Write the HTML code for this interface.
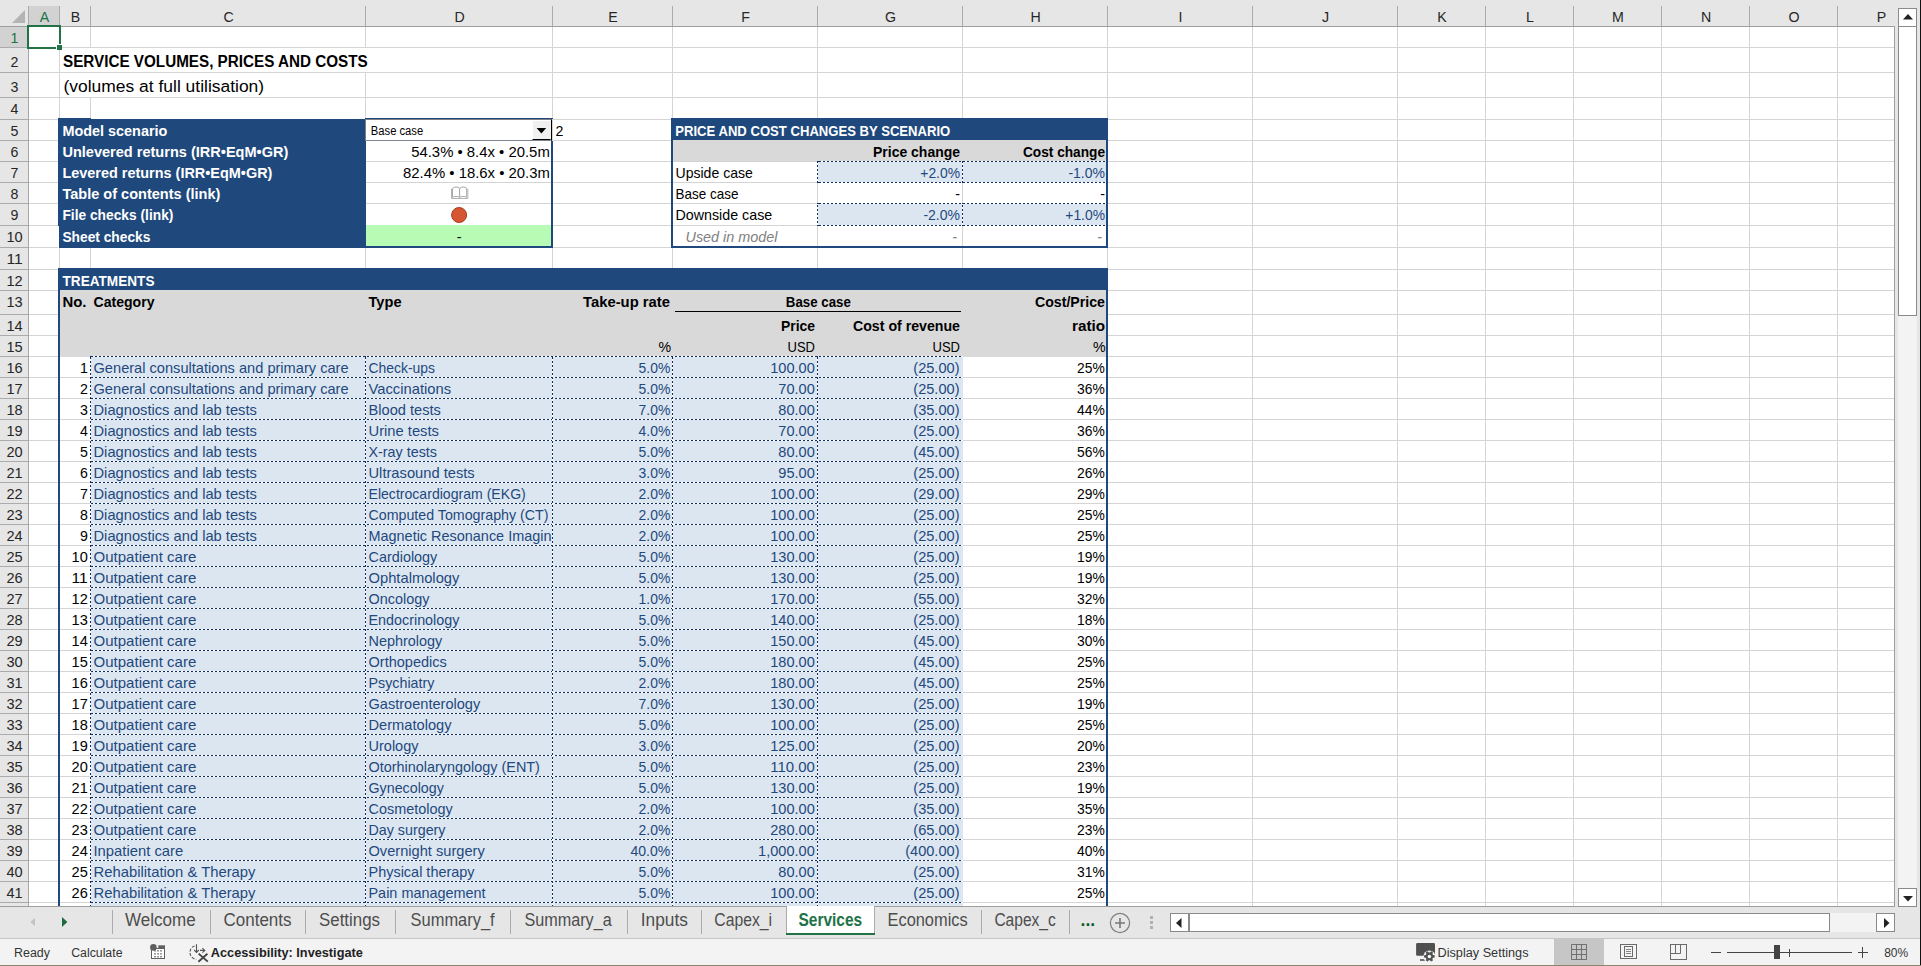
<!DOCTYPE html>
<html lang="en"><head><meta charset="utf-8"><title>Services</title>
<style>
html,body{margin:0;padding:0}
body{width:1921px;height:966px;overflow:hidden;background:#fff;position:relative;font-family:"Liberation Sans",sans-serif}
#x div{position:absolute}
.hd{height:1px;background-image:repeating-linear-gradient(90deg,#0f2f63 0 2px,#fff 2px 4px)}
.vd{width:1px;background-image:repeating-linear-gradient(180deg,#0f2f63 0 2px,#fff 2px 4px)}
#t{position:absolute;left:0;top:0}
#t text{font-family:"Liberation Sans",sans-serif;white-space:pre}
</style></head>
<body>
<div id="x">
<div style="left:29px;top:47px;width:1865px;height:1px;background:#d4d4d4;"></div>
<div style="left:29px;top:72px;width:1865px;height:1px;background:#d4d4d4;"></div>
<div style="left:29px;top:97px;width:1865px;height:1px;background:#d4d4d4;"></div>
<div style="left:29px;top:119px;width:1865px;height:1px;background:#d4d4d4;"></div>
<div style="left:29px;top:140px;width:1865px;height:1px;background:#d4d4d4;"></div>
<div style="left:29px;top:161px;width:1865px;height:1px;background:#d4d4d4;"></div>
<div style="left:29px;top:182px;width:1865px;height:1px;background:#d4d4d4;"></div>
<div style="left:29px;top:203px;width:1865px;height:1px;background:#d4d4d4;"></div>
<div style="left:29px;top:225px;width:1865px;height:1px;background:#d4d4d4;"></div>
<div style="left:29px;top:247px;width:1865px;height:1px;background:#d4d4d4;"></div>
<div style="left:29px;top:269px;width:1865px;height:1px;background:#d4d4d4;"></div>
<div style="left:29px;top:290px;width:1865px;height:1px;background:#d4d4d4;"></div>
<div style="left:29px;top:314px;width:1865px;height:1px;background:#d4d4d4;"></div>
<div style="left:29px;top:335px;width:1865px;height:1px;background:#d4d4d4;"></div>
<div style="left:29px;top:356px;width:1865px;height:1px;background:#d4d4d4;"></div>
<div style="left:29px;top:377px;width:1865px;height:1px;background:#d4d4d4;"></div>
<div style="left:29px;top:398px;width:1865px;height:1px;background:#d4d4d4;"></div>
<div style="left:29px;top:419px;width:1865px;height:1px;background:#d4d4d4;"></div>
<div style="left:29px;top:440px;width:1865px;height:1px;background:#d4d4d4;"></div>
<div style="left:29px;top:461px;width:1865px;height:1px;background:#d4d4d4;"></div>
<div style="left:29px;top:482px;width:1865px;height:1px;background:#d4d4d4;"></div>
<div style="left:29px;top:503px;width:1865px;height:1px;background:#d4d4d4;"></div>
<div style="left:29px;top:524px;width:1865px;height:1px;background:#d4d4d4;"></div>
<div style="left:29px;top:545px;width:1865px;height:1px;background:#d4d4d4;"></div>
<div style="left:29px;top:566px;width:1865px;height:1px;background:#d4d4d4;"></div>
<div style="left:29px;top:587px;width:1865px;height:1px;background:#d4d4d4;"></div>
<div style="left:29px;top:608px;width:1865px;height:1px;background:#d4d4d4;"></div>
<div style="left:29px;top:629px;width:1865px;height:1px;background:#d4d4d4;"></div>
<div style="left:29px;top:650px;width:1865px;height:1px;background:#d4d4d4;"></div>
<div style="left:29px;top:671px;width:1865px;height:1px;background:#d4d4d4;"></div>
<div style="left:29px;top:692px;width:1865px;height:1px;background:#d4d4d4;"></div>
<div style="left:29px;top:713px;width:1865px;height:1px;background:#d4d4d4;"></div>
<div style="left:29px;top:734px;width:1865px;height:1px;background:#d4d4d4;"></div>
<div style="left:29px;top:755px;width:1865px;height:1px;background:#d4d4d4;"></div>
<div style="left:29px;top:776px;width:1865px;height:1px;background:#d4d4d4;"></div>
<div style="left:29px;top:797px;width:1865px;height:1px;background:#d4d4d4;"></div>
<div style="left:29px;top:818px;width:1865px;height:1px;background:#d4d4d4;"></div>
<div style="left:29px;top:839px;width:1865px;height:1px;background:#d4d4d4;"></div>
<div style="left:29px;top:860px;width:1865px;height:1px;background:#d4d4d4;"></div>
<div style="left:29px;top:881px;width:1865px;height:1px;background:#d4d4d4;"></div>
<div style="left:29px;top:902px;width:1865px;height:1px;background:#d4d4d4;"></div>
<div style="left:59px;top:27px;width:1px;height:879px;background:#d4d4d4;"></div>
<div style="left:90px;top:27px;width:1px;height:879px;background:#d4d4d4;"></div>
<div style="left:365px;top:27px;width:1px;height:879px;background:#d4d4d4;"></div>
<div style="left:552px;top:27px;width:1px;height:879px;background:#d4d4d4;"></div>
<div style="left:672px;top:27px;width:1px;height:879px;background:#d4d4d4;"></div>
<div style="left:817px;top:27px;width:1px;height:879px;background:#d4d4d4;"></div>
<div style="left:962px;top:27px;width:1px;height:879px;background:#d4d4d4;"></div>
<div style="left:1107px;top:27px;width:1px;height:879px;background:#d4d4d4;"></div>
<div style="left:1252px;top:27px;width:1px;height:879px;background:#d4d4d4;"></div>
<div style="left:1397px;top:27px;width:1px;height:879px;background:#d4d4d4;"></div>
<div style="left:1485px;top:27px;width:1px;height:879px;background:#d4d4d4;"></div>
<div style="left:1573px;top:27px;width:1px;height:879px;background:#d4d4d4;"></div>
<div style="left:1661px;top:27px;width:1px;height:879px;background:#d4d4d4;"></div>
<div style="left:1749px;top:27px;width:1px;height:879px;background:#d4d4d4;"></div>
<div style="left:1837px;top:27px;width:1px;height:879px;background:#d4d4d4;"></div>
<div style="left:90px;top:48px;width:1px;height:24px;background:#fff;"></div>
<div style="left:365px;top:48px;width:1px;height:24px;background:#fff;"></div>
<div style="left:90px;top:73px;width:1px;height:24px;background:#fff;"></div>
<div style="left:58px;top:118px;width:33px;height:130px;background:#1f497d;"></div>
<div style="left:91px;top:119px;width:275px;height:129px;background:#1f497d;"></div>
<div style="left:58px;top:226px;width:1px;height:22px;background:#fff;"></div>
<div style="left:365px;top:118px;width:188px;height:1px;background:#1f497d;"></div>
<div style="left:551px;top:141px;width:2px;height:107px;background:#1f497d;"></div>
<div style="left:365px;top:246px;width:188px;height:2px;background:#1f497d;"></div>
<div style="left:366px;top:225px;width:185px;height:21px;background:#b7fbb5;"></div>
<div style="left:365px;top:119px;width:187px;height:22px;background:#fff;box-sizing:border-box;border:1px solid #808080;border-right-color:#000;border-bottom-color:#7f8590"></div>
<div style="left:532px;top:120px;width:19px;height:20px;background:#f0f0f0;box-sizing:border-box;border:1px solid;border-color:#fff #f0f0f0 #000 #fff"></div>
<div style="left:552px;top:119px;width:1px;height:22px;background:#d4d4d4;"></div>
<svg style="position:absolute;left:536px;top:128px" width="11" height="6"><path d="M0.6 0H10.2L5.4 5.4Z" fill="#000"/></svg>
<div style="left:671px;top:118px;width:437px;height:22px;background:#1f497d;"></div>
<div style="left:671px;top:118px;width:2px;height:130px;background:#1f497d;"></div>
<div style="left:1106px;top:118px;width:2px;height:130px;background:#1f497d;"></div>
<div style="left:671px;top:246px;width:437px;height:2px;background:#1f497d;"></div>
<div style="left:673px;top:140px;width:433px;height:21px;background:#d9d9d9;"></div>
<div style="left:818px;top:162px;width:288px;height:20px;background:#dce6f1;"></div>
<div class="hd" style="left:817px;top:161px;width:289px;background-position:2px 0"></div>
<div class="hd" style="left:817px;top:182px;width:289px;background-position:2px 0"></div>
<div class="vd" style="left:817px;top:161px;height:22px;background-position:0 0px"></div>
<div class="vd" style="left:962px;top:161px;height:22px;background-position:0 0px"></div>
<div style="left:818px;top:204px;width:288px;height:21px;background:#dce6f1;"></div>
<div class="hd" style="left:817px;top:203px;width:289px;background-position:2px 0"></div>
<div class="hd" style="left:817px;top:225px;width:289px;background-position:2px 0"></div>
<div class="vd" style="left:817px;top:203px;height:23px;background-position:0 2px"></div>
<div class="vd" style="left:962px;top:203px;height:23px;background-position:0 2px"></div>
<div style="left:58px;top:268px;width:1050px;height:22px;background:#1f497d;"></div>
<div style="left:58px;top:268px;width:2px;height:638px;background:#1f497d;"></div>
<div style="left:1106px;top:268px;width:2px;height:638px;background:#1f497d;"></div>
<div style="left:60px;top:290px;width:1046px;height:67px;background:#d9d9d9;"></div>
<div style="left:675px;top:311px;width:286px;height:1px;background:#000;"></div>
<div style="left:91px;top:357px;width:872px;height:549px;background:#dce6f1;"></div>
<div class="hd" style="left:90px;top:356px;width:873px;background-position:1px 0"></div>
<div class="hd" style="left:90px;top:377px;width:873px;background-position:1px 0"></div>
<div class="hd" style="left:90px;top:398px;width:873px;background-position:1px 0"></div>
<div class="hd" style="left:90px;top:419px;width:873px;background-position:1px 0"></div>
<div class="hd" style="left:90px;top:440px;width:873px;background-position:1px 0"></div>
<div class="hd" style="left:90px;top:461px;width:873px;background-position:1px 0"></div>
<div class="hd" style="left:90px;top:482px;width:873px;background-position:1px 0"></div>
<div class="hd" style="left:90px;top:503px;width:873px;background-position:1px 0"></div>
<div class="hd" style="left:90px;top:524px;width:873px;background-position:1px 0"></div>
<div class="hd" style="left:90px;top:545px;width:873px;background-position:1px 0"></div>
<div class="hd" style="left:90px;top:566px;width:873px;background-position:1px 0"></div>
<div class="hd" style="left:90px;top:587px;width:873px;background-position:1px 0"></div>
<div class="hd" style="left:90px;top:608px;width:873px;background-position:1px 0"></div>
<div class="hd" style="left:90px;top:629px;width:873px;background-position:1px 0"></div>
<div class="hd" style="left:90px;top:650px;width:873px;background-position:1px 0"></div>
<div class="hd" style="left:90px;top:671px;width:873px;background-position:1px 0"></div>
<div class="hd" style="left:90px;top:692px;width:873px;background-position:1px 0"></div>
<div class="hd" style="left:90px;top:713px;width:873px;background-position:1px 0"></div>
<div class="hd" style="left:90px;top:734px;width:873px;background-position:1px 0"></div>
<div class="hd" style="left:90px;top:755px;width:873px;background-position:1px 0"></div>
<div class="hd" style="left:90px;top:776px;width:873px;background-position:1px 0"></div>
<div class="hd" style="left:90px;top:797px;width:873px;background-position:1px 0"></div>
<div class="hd" style="left:90px;top:818px;width:873px;background-position:1px 0"></div>
<div class="hd" style="left:90px;top:839px;width:873px;background-position:1px 0"></div>
<div class="hd" style="left:90px;top:860px;width:873px;background-position:1px 0"></div>
<div class="hd" style="left:90px;top:881px;width:873px;background-position:1px 0"></div>
<div class="hd" style="left:90px;top:902px;width:873px;background-position:1px 0"></div>
<div class="vd" style="left:90px;top:356px;height:550px;background-position:0 1px"></div>
<div class="vd" style="left:365px;top:356px;height:550px;background-position:0 1px"></div>
<div class="vd" style="left:552px;top:356px;height:550px;background-position:0 1px"></div>
<div class="vd" style="left:672px;top:356px;height:550px;background-position:0 1px"></div>
<div class="vd" style="left:817px;top:356px;height:550px;background-position:0 1px"></div>
<div style="left:0px;top:0px;width:1921px;height:26px;background:#e6e6e6;"></div>
<div style="left:0px;top:26px;width:1895px;height:1px;background:#9e9e9e;"></div>
<div style="left:0px;top:27px;width:28px;height:879px;background:#e6e6e6;"></div>
<div style="left:28px;top:27px;width:1px;height:879px;background:#a6a6a6;"></div>
<div style="left:29px;top:6px;width:30px;height:20px;background:#d2d2d2;"></div>
<div style="left:0px;top:27px;width:28px;height:20px;background:#d2d2d2;"></div>
<div style="left:28px;top:6px;width:1px;height:20px;background:#ababab;"></div>
<div style="left:59px;top:6px;width:1px;height:20px;background:#ababab;"></div>
<div style="left:90px;top:6px;width:1px;height:20px;background:#ababab;"></div>
<div style="left:365px;top:6px;width:1px;height:20px;background:#ababab;"></div>
<div style="left:552px;top:6px;width:1px;height:20px;background:#ababab;"></div>
<div style="left:672px;top:6px;width:1px;height:20px;background:#ababab;"></div>
<div style="left:817px;top:6px;width:1px;height:20px;background:#ababab;"></div>
<div style="left:962px;top:6px;width:1px;height:20px;background:#ababab;"></div>
<div style="left:1107px;top:6px;width:1px;height:20px;background:#ababab;"></div>
<div style="left:1252px;top:6px;width:1px;height:20px;background:#ababab;"></div>
<div style="left:1397px;top:6px;width:1px;height:20px;background:#ababab;"></div>
<div style="left:1485px;top:6px;width:1px;height:20px;background:#ababab;"></div>
<div style="left:1573px;top:6px;width:1px;height:20px;background:#ababab;"></div>
<div style="left:1661px;top:6px;width:1px;height:20px;background:#ababab;"></div>
<div style="left:1749px;top:6px;width:1px;height:20px;background:#ababab;"></div>
<div style="left:1837px;top:6px;width:1px;height:20px;background:#ababab;"></div>
<div style="left:0px;top:47px;width:28px;height:1px;background:#ababab;"></div>
<div style="left:0px;top:72px;width:28px;height:1px;background:#ababab;"></div>
<div style="left:0px;top:97px;width:28px;height:1px;background:#ababab;"></div>
<div style="left:0px;top:119px;width:28px;height:1px;background:#ababab;"></div>
<div style="left:0px;top:140px;width:28px;height:1px;background:#ababab;"></div>
<div style="left:0px;top:161px;width:28px;height:1px;background:#ababab;"></div>
<div style="left:0px;top:182px;width:28px;height:1px;background:#ababab;"></div>
<div style="left:0px;top:203px;width:28px;height:1px;background:#ababab;"></div>
<div style="left:0px;top:225px;width:28px;height:1px;background:#ababab;"></div>
<div style="left:0px;top:247px;width:28px;height:1px;background:#ababab;"></div>
<div style="left:0px;top:269px;width:28px;height:1px;background:#ababab;"></div>
<div style="left:0px;top:290px;width:28px;height:1px;background:#ababab;"></div>
<div style="left:0px;top:314px;width:28px;height:1px;background:#ababab;"></div>
<div style="left:0px;top:335px;width:28px;height:1px;background:#ababab;"></div>
<div style="left:0px;top:356px;width:28px;height:1px;background:#ababab;"></div>
<div style="left:0px;top:377px;width:28px;height:1px;background:#ababab;"></div>
<div style="left:0px;top:398px;width:28px;height:1px;background:#ababab;"></div>
<div style="left:0px;top:419px;width:28px;height:1px;background:#ababab;"></div>
<div style="left:0px;top:440px;width:28px;height:1px;background:#ababab;"></div>
<div style="left:0px;top:461px;width:28px;height:1px;background:#ababab;"></div>
<div style="left:0px;top:482px;width:28px;height:1px;background:#ababab;"></div>
<div style="left:0px;top:503px;width:28px;height:1px;background:#ababab;"></div>
<div style="left:0px;top:524px;width:28px;height:1px;background:#ababab;"></div>
<div style="left:0px;top:545px;width:28px;height:1px;background:#ababab;"></div>
<div style="left:0px;top:566px;width:28px;height:1px;background:#ababab;"></div>
<div style="left:0px;top:587px;width:28px;height:1px;background:#ababab;"></div>
<div style="left:0px;top:608px;width:28px;height:1px;background:#ababab;"></div>
<div style="left:0px;top:629px;width:28px;height:1px;background:#ababab;"></div>
<div style="left:0px;top:650px;width:28px;height:1px;background:#ababab;"></div>
<div style="left:0px;top:671px;width:28px;height:1px;background:#ababab;"></div>
<div style="left:0px;top:692px;width:28px;height:1px;background:#ababab;"></div>
<div style="left:0px;top:713px;width:28px;height:1px;background:#ababab;"></div>
<div style="left:0px;top:734px;width:28px;height:1px;background:#ababab;"></div>
<div style="left:0px;top:755px;width:28px;height:1px;background:#ababab;"></div>
<div style="left:0px;top:776px;width:28px;height:1px;background:#ababab;"></div>
<div style="left:0px;top:797px;width:28px;height:1px;background:#ababab;"></div>
<div style="left:0px;top:818px;width:28px;height:1px;background:#ababab;"></div>
<div style="left:0px;top:839px;width:28px;height:1px;background:#ababab;"></div>
<div style="left:0px;top:860px;width:28px;height:1px;background:#ababab;"></div>
<div style="left:0px;top:881px;width:28px;height:1px;background:#ababab;"></div>
<div style="left:0px;top:902px;width:28px;height:1px;background:#ababab;"></div>
<svg style="position:absolute;left:11px;top:9px" width="15" height="15"><path d="M14 1V14H1Z" fill="#b4b4b4"/></svg>
<div style="left:1894px;top:26px;width:1px;height:881px;background:#9e9e9e;"></div>
<div style="left:0px;top:906px;width:1895px;height:1px;background:#9e9e9e;"></div>
<div style="left:1895px;top:0px;width:26px;height:907px;background:#e6e6e6;"></div>
<div style="left:27px;top:25px;width:34px;height:2px;background:#217346;"></div>
<div style="left:27px;top:25px;width:2px;height:24px;background:#217346;"></div>
<div style="left:59px;top:25px;width:2px;height:21px;background:#217346;"></div>
<div style="left:27px;top:47px;width:30px;height:2px;background:#217346;"></div>
<div style="left:56px;top:44px;width:6px;height:6px;background:#fff;"></div>
<div style="left:57px;top:45px;width:5px;height:5px;background:#217346;"></div>
<div style="left:1898px;top:27px;width:19px;height:861px;background:#f3f3f3;"></div>
<div style="left:1898px;top:8px;width:19px;height:19px;background:#fff;box-sizing:border-box;border:1px solid #8a8a8a"></div>
<div style="left:1898px;top:27px;width:19px;height:289px;background:#fff;box-sizing:border-box;border:1px solid #8a8a8a;border-top:none"></div>
<div style="left:1898px;top:888px;width:19px;height:19px;background:#fff;box-sizing:border-box;border:1px solid #8a8a8a"></div>
<svg style="position:absolute;left:1903px;top:14px" width="10" height="6"><path d="M0 5.5H10L5 0Z" fill="#222"/></svg>
<svg style="position:absolute;left:1903px;top:896px" width="10" height="6"><path d="M0 0H10L5 5.5Z" fill="#222"/></svg>
<div style="left:1920px;top:0px;width:1px;height:966px;background:#111;"></div>
<div style="left:0px;top:907px;width:1920px;height:31px;background:#e6e6e6;"></div>
<div style="left:0px;top:938px;width:1920px;height:1px;background:#c6c6c6;"></div>
<div style="left:0px;top:939px;width:1920px;height:26px;background:#f3f3f3;"></div>
<div style="left:0px;top:965px;width:1921px;height:1px;background:#8a8672;"></div>
<svg style="position:absolute;left:29px;top:916px" width="8" height="12"><path d="M6 2V10L1.2 6Z" fill="#c3c3c3"/></svg>
<svg style="position:absolute;left:61px;top:916px" width="8" height="12"><path d="M1 1V11L6.4 6Z" fill="#1e6b3d"/></svg>
<div style="left:112px;top:910px;width:1px;height:24px;background:#ababab;"></div>
<div style="left:210px;top:910px;width:1px;height:24px;background:#ababab;"></div>
<div style="left:305px;top:910px;width:1px;height:24px;background:#ababab;"></div>
<div style="left:395px;top:910px;width:1px;height:24px;background:#ababab;"></div>
<div style="left:510px;top:910px;width:1px;height:24px;background:#ababab;"></div>
<div style="left:627px;top:910px;width:1px;height:24px;background:#ababab;"></div>
<div style="left:701px;top:910px;width:1px;height:24px;background:#ababab;"></div>
<div style="left:981px;top:910px;width:1px;height:24px;background:#ababab;"></div>
<div style="left:1069px;top:910px;width:1px;height:24px;background:#ababab;"></div>
<div style="left:786px;top:906px;width:89px;height:27px;background:#fff;box-sizing:border-box;border-left:1px solid #ababab;border-right:1px solid #ababab"></div>
<div style="left:786px;top:933px;width:89px;height:2px;background:#217346;"></div>
<svg style="position:absolute;left:1109px;top:912px" width="22" height="22"><circle cx="11" cy="11" r="9.6" fill="none" stroke="#808080" stroke-width="1.2"/><path d="M6 11H16M11 6V16" stroke="#777" stroke-width="1.6"/></svg>
<div style="left:1150px;top:916px;width:3px;height:3px;background:#b0b0b0;"></div>
<div style="left:1150px;top:921px;width:3px;height:3px;background:#b0b0b0;"></div>
<div style="left:1150px;top:926px;width:3px;height:3px;background:#b0b0b0;"></div>
<div style="left:1170px;top:913px;width:725px;height:19px;background:#f3f3f3;"></div>
<div style="left:1170px;top:913px;width:19px;height:19px;background:#fff;box-sizing:border-box;border:1px solid #8a8a8a"></div>
<div style="left:1189px;top:913px;width:641px;height:19px;background:#fff;box-sizing:border-box;border:1px solid #8a8a8a"></div>
<div style="left:1876px;top:913px;width:19px;height:19px;background:#fff;box-sizing:border-box;border:1px solid #8a8a8a"></div>
<svg style="position:absolute;left:1176px;top:918px" width="6" height="10"><path d="M5.5 0V10L0 5Z" fill="#222"/></svg>
<svg style="position:absolute;left:1884px;top:918px" width="6" height="10"><path d="M0 0V10L5.5 5Z" fill="#222"/></svg>
<svg style="position:absolute;left:149px;top:943px" width="18" height="18"><rect x="2.5" y="5.5" width="13" height="10" fill="#fff" stroke="#606060"/><rect x="9.3" y="2.3" width="6.7" height="3.2" fill="#606060"/><circle cx="4.4" cy="4.4" r="3.3" fill="#606060"/><path d="M5 7.9H14M5 10.9H14M5 13.8H14" stroke="#606060" stroke-width="1" stroke-dasharray="2 1"/></svg>
<svg style="position:absolute;left:186px;top:942px" width="24" height="22"><path d="M8.6 3.9A6.9 6.9 0 0 0 10.3 17.3" fill="none" stroke="#555" stroke-width="1.1" stroke-dasharray="3 1.5"/><path d="M10.5 2.2V10.2M8.2 8L10.5 10.4L12.8 8M14 8.4H18.6M16.4 6.2L18.8 8.4L16.4 10.6" fill="none" stroke="#555" stroke-width="1.1"/><path d="M12.6 11.6L21.8 19.6M21.4 11.8L12.4 19.8" stroke="#444" stroke-width="1.9"/></svg>
<svg style="position:absolute;left:1415px;top:942px" width="22" height="22"><rect x="1.1" y="1.1" width="18.9" height="12.6" rx="1.3" fill="#505050"/><rect x="5" y="17.2" width="4.8" height="1.6" fill="#505050"/><circle cx="14.4" cy="14.4" r="6.0" fill="#f3f3f3"/><path d="M18.04 13.00L19.70 13.37L19.70 15.43L18.04 15.80L17.43 16.85L17.94 18.48L16.16 19.51L15.01 18.25L13.79 18.25L12.64 19.51L10.86 18.48L11.37 16.85L10.76 15.80L9.10 15.43L9.10 13.37L10.76 13.00L11.37 11.95L10.86 10.32L12.64 9.29L13.79 10.55L15.01 10.55L16.16 9.29L17.94 10.32L17.43 11.95Z" fill="#505050"/><circle cx="14.4" cy="14.4" r="1.75" fill="#fafafa"/></svg>
<div style="left:1554px;top:939px;width:50px;height:26px;background:#c6c6c6;"></div>
<svg style="position:absolute;left:1571px;top:944px" width="16" height="16"><path d="M0.5 0.5H15.5V15.5H0.5ZM0.5 5.5H15.5M0.5 10.5H15.5M5.5 0.5V15.5M10.5 0.5V15.5" fill="none" stroke="#707070" stroke-width="1"/></svg>
<svg style="position:absolute;left:1620px;top:944px" width="17" height="16"><rect x="0.5" y="0.5" width="16" height="14" fill="none" stroke="#6a6a6a"/><rect x="4.5" y="2.5" width="8" height="10" fill="none" stroke="#6a6a6a"/><path d="M6 5.5H11M6 7.5H11M6 9.5H11" stroke="#6a6a6a" stroke-width="0.8"/></svg>
<svg style="position:absolute;left:1670px;top:944px" width="17" height="16"><rect x="0.5" y="0.5" width="16" height="15" fill="none" stroke="#6a6a6a"/><path d="M5.5 0.5V9.5M10.5 0.5V9.5M0.5 9.5H10.5" fill="none" stroke="#6a6a6a"/></svg>
<div style="left:1711px;top:952px;width:10px;height:1px;background:#444;"></div>
<div style="left:1727px;top:952px;width:125px;height:1px;background:#444;"></div>
<div style="left:1774px;top:945px;width:6px;height:14px;background:#444;"></div>
<div style="left:1789px;top:949px;width:1px;height:8px;background:#444;"></div>
<div style="left:1858px;top:952px;width:10px;height:1px;background:#444;"></div>
<div style="left:1862px;top:947px;width:1px;height:11px;background:#444;"></div>
<svg style="position:absolute;left:450px;top:185px" width="20" height="15"><path d="M2.5 3.4C4.6 1.6 7.6 1.6 9.6 3.4C11.6 1.6 14.6 1.6 16.7 3.4V12.3C14.6 11.2 11.6 11.2 9.6 12.3C7.6 11.2 4.6 11.2 2.5 12.3Z" fill="#fff" stroke="#a6a6a6" stroke-width="1"/><path d="M9.6 3.4V12.3" stroke="#a0a0a0" stroke-width="1"/><path d="M1.5 3.8V13.5H17.8V3.8" fill="none" stroke="#b4b4b4" stroke-width="1"/></svg>
<svg style="position:absolute;left:450px;top:206px" width="18" height="18"><circle cx="9.1" cy="9" r="7.5" fill="#d65532" stroke="#a83d1f" stroke-width="1"/></svg>
</div>
<svg id="t" width="1921" height="966" viewBox="0 0 1921 966" font-size="14.2" fill="#000">
<text x="125" y="926.3" fill="#4d4d4d" font-size="17.5" textLength="70.8" lengthAdjust="spacingAndGlyphs">Welcome</text>
<text x="223.5" y="926.3" fill="#4d4d4d" font-size="17.5" textLength="68.0" lengthAdjust="spacingAndGlyphs">Contents</text>
<text x="319" y="926.3" fill="#4d4d4d" font-size="17.5" textLength="61.0" lengthAdjust="spacingAndGlyphs">Settings</text>
<text x="410.6" y="926.3" fill="#4d4d4d" font-size="17.5" textLength="84.0" lengthAdjust="spacingAndGlyphs">Summary_f</text>
<text x="524.4" y="926.3" fill="#4d4d4d" font-size="17.5" textLength="87.3" lengthAdjust="spacingAndGlyphs">Summary_a</text>
<text x="640.8" y="926.3" fill="#4d4d4d" font-size="17.5" textLength="47.1" lengthAdjust="spacingAndGlyphs">Inputs</text>
<text x="714.3" y="926.3" fill="#4d4d4d" font-size="17.5" textLength="57.7" lengthAdjust="spacingAndGlyphs">Capex_i</text>
<text x="887.5" y="926.3" fill="#4d4d4d" font-size="17.5" textLength="80.2" lengthAdjust="spacingAndGlyphs">Economics</text>
<text x="994.4" y="926.3" fill="#4d4d4d" font-size="17.5" textLength="61.4" lengthAdjust="spacingAndGlyphs">Capex_c</text>
<text x="798.5" y="926.3" font-weight="700" fill="#217346" font-size="17.5" textLength="63.6" lengthAdjust="spacingAndGlyphs">Services</text>
<text x="1080.6" y="926.3" font-weight="700" fill="#0e5c2f" font-size="17.5">...</text>
<text x="14" y="957" fill="#333" font-size="12.5" textLength="36.0" lengthAdjust="spacingAndGlyphs">Ready</text>
<text x="71.2" y="957" fill="#333" font-size="12.5" textLength="51.3" lengthAdjust="spacingAndGlyphs">Calculate</text>
<text x="210.8" y="957" font-weight="700" fill="#222" font-size="12.5" textLength="152.0" lengthAdjust="spacingAndGlyphs">Accessibility: Investigate</text>
<text x="1437.5" y="957" fill="#333" font-size="12.5" textLength="91.0" lengthAdjust="spacingAndGlyphs">Display Settings</text>
<text x="1884.2" y="957" fill="#333" font-size="12.5" textLength="24.0" lengthAdjust="spacingAndGlyphs">80%</text>
<text x="44.5" y="22" text-anchor="middle" fill="#217346">A</text>
<text x="75.5" y="22" text-anchor="middle" fill="#262626">B</text>
<text x="228.5" y="22" text-anchor="middle" fill="#262626">C</text>
<text x="459.5" y="22" text-anchor="middle" fill="#262626">D</text>
<text x="613.0" y="22" text-anchor="middle" fill="#262626">E</text>
<text x="745.5" y="22" text-anchor="middle" fill="#262626">F</text>
<text x="890.5" y="22" text-anchor="middle" fill="#262626">G</text>
<text x="1035.5" y="22" text-anchor="middle" fill="#262626">H</text>
<text x="1180.5" y="22" text-anchor="middle" fill="#262626">I</text>
<text x="1325.5" y="22" text-anchor="middle" fill="#262626">J</text>
<text x="1442.0" y="22" text-anchor="middle" fill="#262626">K</text>
<text x="1530.0" y="22" text-anchor="middle" fill="#262626">L</text>
<text x="1618.0" y="22" text-anchor="middle" fill="#262626">M</text>
<text x="1706.0" y="22" text-anchor="middle" fill="#262626">N</text>
<text x="1794.0" y="22" text-anchor="middle" fill="#262626">O</text>
<text x="1881.5" y="22" text-anchor="middle" fill="#262626">P</text>
<text x="14.5" y="43" text-anchor="middle" fill="#217346">1</text>
<text x="14.5" y="67" text-anchor="middle" fill="#262626">2</text>
<text x="14.5" y="92" text-anchor="middle" fill="#262626">3</text>
<text x="14.5" y="114" text-anchor="middle" fill="#262626">4</text>
<text x="14.5" y="136" text-anchor="middle" fill="#262626">5</text>
<text x="14.5" y="157" text-anchor="middle" fill="#262626">6</text>
<text x="14.5" y="178" text-anchor="middle" fill="#262626">7</text>
<text x="14.5" y="199" text-anchor="middle" fill="#262626">8</text>
<text x="14.5" y="220" text-anchor="middle" fill="#262626">9</text>
<text x="14.5" y="242" text-anchor="middle" fill="#262626" textLength="16.2" lengthAdjust="spacingAndGlyphs">10</text>
<text x="14.5" y="264" text-anchor="middle" fill="#262626" textLength="16.2" lengthAdjust="spacingAndGlyphs">11</text>
<text x="14.5" y="286" text-anchor="middle" fill="#262626" textLength="16.2" lengthAdjust="spacingAndGlyphs">12</text>
<text x="14.5" y="307" text-anchor="middle" fill="#262626" textLength="16.2" lengthAdjust="spacingAndGlyphs">13</text>
<text x="14.5" y="331" text-anchor="middle" fill="#262626" textLength="16.2" lengthAdjust="spacingAndGlyphs">14</text>
<text x="14.5" y="352" text-anchor="middle" fill="#262626" textLength="16.2" lengthAdjust="spacingAndGlyphs">15</text>
<text x="14.5" y="373" text-anchor="middle" fill="#262626" textLength="16.2" lengthAdjust="spacingAndGlyphs">16</text>
<text x="14.5" y="394" text-anchor="middle" fill="#262626" textLength="16.2" lengthAdjust="spacingAndGlyphs">17</text>
<text x="14.5" y="415" text-anchor="middle" fill="#262626" textLength="16.2" lengthAdjust="spacingAndGlyphs">18</text>
<text x="14.5" y="436" text-anchor="middle" fill="#262626" textLength="16.2" lengthAdjust="spacingAndGlyphs">19</text>
<text x="14.5" y="457" text-anchor="middle" fill="#262626" textLength="16.2" lengthAdjust="spacingAndGlyphs">20</text>
<text x="14.5" y="478" text-anchor="middle" fill="#262626" textLength="16.2" lengthAdjust="spacingAndGlyphs">21</text>
<text x="14.5" y="499" text-anchor="middle" fill="#262626" textLength="16.2" lengthAdjust="spacingAndGlyphs">22</text>
<text x="14.5" y="520" text-anchor="middle" fill="#262626" textLength="16.2" lengthAdjust="spacingAndGlyphs">23</text>
<text x="14.5" y="541" text-anchor="middle" fill="#262626" textLength="16.2" lengthAdjust="spacingAndGlyphs">24</text>
<text x="14.5" y="562" text-anchor="middle" fill="#262626" textLength="16.2" lengthAdjust="spacingAndGlyphs">25</text>
<text x="14.5" y="583" text-anchor="middle" fill="#262626" textLength="16.2" lengthAdjust="spacingAndGlyphs">26</text>
<text x="14.5" y="604" text-anchor="middle" fill="#262626" textLength="16.2" lengthAdjust="spacingAndGlyphs">27</text>
<text x="14.5" y="625" text-anchor="middle" fill="#262626" textLength="16.2" lengthAdjust="spacingAndGlyphs">28</text>
<text x="14.5" y="646" text-anchor="middle" fill="#262626" textLength="16.2" lengthAdjust="spacingAndGlyphs">29</text>
<text x="14.5" y="667" text-anchor="middle" fill="#262626" textLength="16.2" lengthAdjust="spacingAndGlyphs">30</text>
<text x="14.5" y="688" text-anchor="middle" fill="#262626" textLength="16.2" lengthAdjust="spacingAndGlyphs">31</text>
<text x="14.5" y="709" text-anchor="middle" fill="#262626" textLength="16.2" lengthAdjust="spacingAndGlyphs">32</text>
<text x="14.5" y="730" text-anchor="middle" fill="#262626" textLength="16.2" lengthAdjust="spacingAndGlyphs">33</text>
<text x="14.5" y="751" text-anchor="middle" fill="#262626" textLength="16.2" lengthAdjust="spacingAndGlyphs">34</text>
<text x="14.5" y="772" text-anchor="middle" fill="#262626" textLength="16.2" lengthAdjust="spacingAndGlyphs">35</text>
<text x="14.5" y="793" text-anchor="middle" fill="#262626" textLength="16.2" lengthAdjust="spacingAndGlyphs">36</text>
<text x="14.5" y="814" text-anchor="middle" fill="#262626" textLength="16.2" lengthAdjust="spacingAndGlyphs">37</text>
<text x="14.5" y="835" text-anchor="middle" fill="#262626" textLength="16.2" lengthAdjust="spacingAndGlyphs">38</text>
<text x="14.5" y="856" text-anchor="middle" fill="#262626" textLength="16.2" lengthAdjust="spacingAndGlyphs">39</text>
<text x="14.5" y="877" text-anchor="middle" fill="#262626" textLength="16.2" lengthAdjust="spacingAndGlyphs">40</text>
<text x="14.5" y="898" text-anchor="middle" fill="#262626" textLength="16.2" lengthAdjust="spacingAndGlyphs">41</text>
<text x="63" y="67" font-weight="700" font-size="17.2" textLength="304.7" lengthAdjust="spacingAndGlyphs">SERVICE VOLUMES, PRICES AND COSTS</text>
<text x="63.5" y="92" font-size="16.8" textLength="200.6" lengthAdjust="spacingAndGlyphs">(volumes at full utilisation)</text>
<text x="62.4" y="136" font-weight="700" fill="#fff" textLength="105.0" lengthAdjust="spacingAndGlyphs">Model scenario</text>
<text x="62.4" y="157" font-weight="700" fill="#fff" textLength="226.0" lengthAdjust="spacingAndGlyphs">Unlevered returns (IRR•EqM•GR)</text>
<text x="62.4" y="178" font-weight="700" fill="#fff" textLength="210.0" lengthAdjust="spacingAndGlyphs">Levered returns (IRR•EqM•GR)</text>
<text x="62.4" y="199" font-weight="700" fill="#fff" textLength="158.0" lengthAdjust="spacingAndGlyphs">Table of contents (link)</text>
<text x="62.4" y="220" font-weight="700" fill="#fff" textLength="111.0" lengthAdjust="spacingAndGlyphs">File checks (link)</text>
<text x="62.4" y="242" font-weight="700" fill="#fff" textLength="88.0" lengthAdjust="spacingAndGlyphs">Sheet checks</text>
<text x="370.8" y="135" font-size="12" textLength="52.4" lengthAdjust="spacingAndGlyphs">Base case</text>
<text x="555.4" y="136">2</text>
<text x="549.8" y="157" text-anchor="end" textLength="138.6" lengthAdjust="spacingAndGlyphs">54.3% • 8.4x • 20.5m</text>
<text x="549.8" y="178" text-anchor="end" textLength="146.7" lengthAdjust="spacingAndGlyphs">82.4% • 18.6x • 20.3m</text>
<text x="459" y="242" text-anchor="middle">-</text>
<text x="675.3" y="136" font-weight="700" fill="#fff" textLength="275.0" lengthAdjust="spacingAndGlyphs">PRICE AND COST CHANGES BY SCENARIO</text>
<text x="960" y="157" text-anchor="end" font-weight="700" textLength="87.0" lengthAdjust="spacingAndGlyphs">Price change</text>
<text x="1105" y="157" text-anchor="end" font-weight="700" textLength="82.0" lengthAdjust="spacingAndGlyphs">Cost change</text>
<text x="675.5" y="178" textLength="77.3" lengthAdjust="spacingAndGlyphs">Upside case</text>
<text x="960" y="178" text-anchor="end" fill="#1f497d" textLength="39.7" lengthAdjust="spacingAndGlyphs">+2.0%</text>
<text x="1105" y="178" text-anchor="end" fill="#1f497d" textLength="36.6" lengthAdjust="spacingAndGlyphs">-1.0%</text>
<text x="675.5" y="199" textLength="62.9" lengthAdjust="spacingAndGlyphs">Base case</text>
<text x="960" y="199" text-anchor="end">-</text>
<text x="1105" y="199" text-anchor="end">-</text>
<text x="675.5" y="220" textLength="96.7" lengthAdjust="spacingAndGlyphs">Downside case</text>
<text x="960" y="220" text-anchor="end" fill="#1f497d" textLength="36.6" lengthAdjust="spacingAndGlyphs">-2.0%</text>
<text x="1105" y="220" text-anchor="end" fill="#1f497d" textLength="39.7" lengthAdjust="spacingAndGlyphs">+1.0%</text>
<text x="685.5" y="242" font-style="italic" fill="#808080" textLength="92.0" lengthAdjust="spacingAndGlyphs">Used in model</text>
<text x="957" y="242" text-anchor="end" font-style="italic" fill="#808080">-</text>
<text x="1102" y="242" text-anchor="end" font-style="italic" fill="#808080">-</text>
<text x="62.5" y="286" font-weight="700" fill="#fff" textLength="92.0" lengthAdjust="spacingAndGlyphs">TREATMENTS</text>
<text x="62.5" y="307" font-weight="700" textLength="24.0" lengthAdjust="spacingAndGlyphs">No.</text>
<text x="93.5" y="307" font-weight="700" textLength="61.0" lengthAdjust="spacingAndGlyphs">Category</text>
<text x="368.5" y="307" font-weight="700" textLength="33.0" lengthAdjust="spacingAndGlyphs">Type</text>
<text x="670" y="307" text-anchor="end" font-weight="700" textLength="87.0" lengthAdjust="spacingAndGlyphs">Take-up rate</text>
<text x="818.3" y="307" text-anchor="middle" font-weight="700" textLength="65.0" lengthAdjust="spacingAndGlyphs">Base case</text>
<text x="1105" y="307" text-anchor="end" font-weight="700" textLength="70.0" lengthAdjust="spacingAndGlyphs">Cost/Price</text>
<text x="815" y="331" text-anchor="end" font-weight="700" textLength="34.0" lengthAdjust="spacingAndGlyphs">Price</text>
<text x="960" y="331" text-anchor="end" font-weight="700" textLength="107.0" lengthAdjust="spacingAndGlyphs">Cost of revenue</text>
<text x="1105" y="331" text-anchor="end" font-weight="700" textLength="33.0" lengthAdjust="spacingAndGlyphs">ratio</text>
<text x="671" y="352" text-anchor="end">%</text>
<text x="815" y="352" text-anchor="end" textLength="27.5" lengthAdjust="spacingAndGlyphs">USD</text>
<text x="960" y="352" text-anchor="end" textLength="27.5" lengthAdjust="spacingAndGlyphs">USD</text>
<text x="1105.5" y="352" text-anchor="end">%</text>
<text x="87.8" y="373" text-anchor="end">1</text>
<text x="93.5" y="373" fill="#1f497d" textLength="255.1" lengthAdjust="spacingAndGlyphs">General consultations and primary care</text>
<text x="368.5" y="373" fill="#1f497d" textLength="66.5" lengthAdjust="spacingAndGlyphs">Check-ups</text>
<text x="670.3" y="373" text-anchor="end" fill="#1f497d" textLength="31.7" lengthAdjust="spacingAndGlyphs">5.0%</text>
<text x="814.8" y="373" text-anchor="end" fill="#1f497d" textLength="44.6" lengthAdjust="spacingAndGlyphs">100.00</text>
<text x="959.5" y="373" text-anchor="end" fill="#1f497d" textLength="46.2" lengthAdjust="spacingAndGlyphs">(25.00)</text>
<text x="1104.7" y="373" text-anchor="end" textLength="27.7" lengthAdjust="spacingAndGlyphs">25%</text>
<text x="87.8" y="394" text-anchor="end">2</text>
<text x="93.5" y="394" fill="#1f497d" textLength="255.1" lengthAdjust="spacingAndGlyphs">General consultations and primary care</text>
<text x="368.5" y="394" fill="#1f497d" textLength="82.6" lengthAdjust="spacingAndGlyphs">Vaccinations</text>
<text x="670.3" y="394" text-anchor="end" fill="#1f497d" textLength="31.7" lengthAdjust="spacingAndGlyphs">5.0%</text>
<text x="814.8" y="394" text-anchor="end" fill="#1f497d" textLength="36.5" lengthAdjust="spacingAndGlyphs">70.00</text>
<text x="959.5" y="394" text-anchor="end" fill="#1f497d" textLength="46.2" lengthAdjust="spacingAndGlyphs">(25.00)</text>
<text x="1104.7" y="394" text-anchor="end" textLength="27.7" lengthAdjust="spacingAndGlyphs">36%</text>
<text x="87.8" y="415" text-anchor="end">3</text>
<text x="93.5" y="415" fill="#1f497d" textLength="163.4" lengthAdjust="spacingAndGlyphs">Diagnostics and lab tests</text>
<text x="368.5" y="415" fill="#1f497d" textLength="72.4" lengthAdjust="spacingAndGlyphs">Blood tests</text>
<text x="670.3" y="415" text-anchor="end" fill="#1f497d" textLength="31.7" lengthAdjust="spacingAndGlyphs">7.0%</text>
<text x="814.8" y="415" text-anchor="end" fill="#1f497d" textLength="36.5" lengthAdjust="spacingAndGlyphs">80.00</text>
<text x="959.5" y="415" text-anchor="end" fill="#1f497d" textLength="46.2" lengthAdjust="spacingAndGlyphs">(35.00)</text>
<text x="1104.7" y="415" text-anchor="end" textLength="27.7" lengthAdjust="spacingAndGlyphs">44%</text>
<text x="87.8" y="436" text-anchor="end">4</text>
<text x="93.5" y="436" fill="#1f497d" textLength="163.4" lengthAdjust="spacingAndGlyphs">Diagnostics and lab tests</text>
<text x="368.5" y="436" fill="#1f497d" textLength="70.4" lengthAdjust="spacingAndGlyphs">Urine tests</text>
<text x="670.3" y="436" text-anchor="end" fill="#1f497d" textLength="31.7" lengthAdjust="spacingAndGlyphs">4.0%</text>
<text x="814.8" y="436" text-anchor="end" fill="#1f497d" textLength="36.5" lengthAdjust="spacingAndGlyphs">70.00</text>
<text x="959.5" y="436" text-anchor="end" fill="#1f497d" textLength="46.2" lengthAdjust="spacingAndGlyphs">(25.00)</text>
<text x="1104.7" y="436" text-anchor="end" textLength="27.7" lengthAdjust="spacingAndGlyphs">36%</text>
<text x="87.8" y="457" text-anchor="end">5</text>
<text x="93.5" y="457" fill="#1f497d" textLength="163.4" lengthAdjust="spacingAndGlyphs">Diagnostics and lab tests</text>
<text x="368.5" y="457" fill="#1f497d" textLength="68.5" lengthAdjust="spacingAndGlyphs">X-ray tests</text>
<text x="670.3" y="457" text-anchor="end" fill="#1f497d" textLength="31.7" lengthAdjust="spacingAndGlyphs">5.0%</text>
<text x="814.8" y="457" text-anchor="end" fill="#1f497d" textLength="36.5" lengthAdjust="spacingAndGlyphs">80.00</text>
<text x="959.5" y="457" text-anchor="end" fill="#1f497d" textLength="46.2" lengthAdjust="spacingAndGlyphs">(45.00)</text>
<text x="1104.7" y="457" text-anchor="end" textLength="27.7" lengthAdjust="spacingAndGlyphs">56%</text>
<text x="87.8" y="478" text-anchor="end">6</text>
<text x="93.5" y="478" fill="#1f497d" textLength="163.4" lengthAdjust="spacingAndGlyphs">Diagnostics and lab tests</text>
<text x="368.5" y="478" fill="#1f497d" textLength="106.2" lengthAdjust="spacingAndGlyphs">Ultrasound tests</text>
<text x="670.3" y="478" text-anchor="end" fill="#1f497d" textLength="31.7" lengthAdjust="spacingAndGlyphs">3.0%</text>
<text x="814.8" y="478" text-anchor="end" fill="#1f497d" textLength="36.5" lengthAdjust="spacingAndGlyphs">95.00</text>
<text x="959.5" y="478" text-anchor="end" fill="#1f497d" textLength="46.2" lengthAdjust="spacingAndGlyphs">(25.00)</text>
<text x="1104.7" y="478" text-anchor="end" textLength="27.7" lengthAdjust="spacingAndGlyphs">26%</text>
<text x="87.8" y="499" text-anchor="end">7</text>
<text x="93.5" y="499" fill="#1f497d" textLength="163.4" lengthAdjust="spacingAndGlyphs">Diagnostics and lab tests</text>
<text x="368.5" y="499" fill="#1f497d" textLength="157.3" lengthAdjust="spacingAndGlyphs">Electrocardiogram (EKG)</text>
<text x="670.3" y="499" text-anchor="end" fill="#1f497d" textLength="31.7" lengthAdjust="spacingAndGlyphs">2.0%</text>
<text x="814.8" y="499" text-anchor="end" fill="#1f497d" textLength="44.6" lengthAdjust="spacingAndGlyphs">100.00</text>
<text x="959.5" y="499" text-anchor="end" fill="#1f497d" textLength="46.2" lengthAdjust="spacingAndGlyphs">(29.00)</text>
<text x="1104.7" y="499" text-anchor="end" textLength="27.7" lengthAdjust="spacingAndGlyphs">29%</text>
<text x="87.8" y="520" text-anchor="end">8</text>
<text x="93.5" y="520" fill="#1f497d" textLength="163.4" lengthAdjust="spacingAndGlyphs">Diagnostics and lab tests</text>
<text x="368.5" y="520" fill="#1f497d" textLength="180.0" lengthAdjust="spacingAndGlyphs">Computed Tomography (CT)</text>
<text x="670.3" y="520" text-anchor="end" fill="#1f497d" textLength="31.7" lengthAdjust="spacingAndGlyphs">2.0%</text>
<text x="814.8" y="520" text-anchor="end" fill="#1f497d" textLength="44.6" lengthAdjust="spacingAndGlyphs">100.00</text>
<text x="959.5" y="520" text-anchor="end" fill="#1f497d" textLength="46.2" lengthAdjust="spacingAndGlyphs">(25.00)</text>
<text x="1104.7" y="520" text-anchor="end" textLength="27.7" lengthAdjust="spacingAndGlyphs">25%</text>
<text x="87.8" y="541" text-anchor="end">9</text>
<text x="93.5" y="541" fill="#1f497d" textLength="163.4" lengthAdjust="spacingAndGlyphs">Diagnostics and lab tests</text>
<text x="368.5" y="541" fill="#1f497d" textLength="183.0" lengthAdjust="spacingAndGlyphs">Magnetic Resonance Imagin</text>
<text x="670.3" y="541" text-anchor="end" fill="#1f497d" textLength="31.7" lengthAdjust="spacingAndGlyphs">2.0%</text>
<text x="814.8" y="541" text-anchor="end" fill="#1f497d" textLength="44.6" lengthAdjust="spacingAndGlyphs">100.00</text>
<text x="959.5" y="541" text-anchor="end" fill="#1f497d" textLength="46.2" lengthAdjust="spacingAndGlyphs">(25.00)</text>
<text x="1104.7" y="541" text-anchor="end" textLength="27.7" lengthAdjust="spacingAndGlyphs">25%</text>
<text x="87.8" y="562" text-anchor="end" textLength="16.2" lengthAdjust="spacingAndGlyphs">10</text>
<text x="93.5" y="562" fill="#1f497d" textLength="102.8" lengthAdjust="spacingAndGlyphs">Outpatient care</text>
<text x="368.5" y="562" fill="#1f497d" textLength="68.8" lengthAdjust="spacingAndGlyphs">Cardiology</text>
<text x="670.3" y="562" text-anchor="end" fill="#1f497d" textLength="31.7" lengthAdjust="spacingAndGlyphs">5.0%</text>
<text x="814.8" y="562" text-anchor="end" fill="#1f497d" textLength="44.6" lengthAdjust="spacingAndGlyphs">130.00</text>
<text x="959.5" y="562" text-anchor="end" fill="#1f497d" textLength="46.2" lengthAdjust="spacingAndGlyphs">(25.00)</text>
<text x="1104.7" y="562" text-anchor="end" textLength="27.7" lengthAdjust="spacingAndGlyphs">19%</text>
<text x="87.8" y="583" text-anchor="end" textLength="16.2" lengthAdjust="spacingAndGlyphs">11</text>
<text x="93.5" y="583" fill="#1f497d" textLength="102.8" lengthAdjust="spacingAndGlyphs">Outpatient care</text>
<text x="368.5" y="583" fill="#1f497d" textLength="90.9" lengthAdjust="spacingAndGlyphs">Ophtalmology</text>
<text x="670.3" y="583" text-anchor="end" fill="#1f497d" textLength="31.7" lengthAdjust="spacingAndGlyphs">5.0%</text>
<text x="814.8" y="583" text-anchor="end" fill="#1f497d" textLength="44.6" lengthAdjust="spacingAndGlyphs">130.00</text>
<text x="959.5" y="583" text-anchor="end" fill="#1f497d" textLength="46.2" lengthAdjust="spacingAndGlyphs">(25.00)</text>
<text x="1104.7" y="583" text-anchor="end" textLength="27.7" lengthAdjust="spacingAndGlyphs">19%</text>
<text x="87.8" y="604" text-anchor="end" textLength="16.2" lengthAdjust="spacingAndGlyphs">12</text>
<text x="93.5" y="604" fill="#1f497d" textLength="102.8" lengthAdjust="spacingAndGlyphs">Outpatient care</text>
<text x="368.5" y="604" fill="#1f497d" textLength="61.0" lengthAdjust="spacingAndGlyphs">Oncology</text>
<text x="670.3" y="604" text-anchor="end" fill="#1f497d" textLength="31.7" lengthAdjust="spacingAndGlyphs">1.0%</text>
<text x="814.8" y="604" text-anchor="end" fill="#1f497d" textLength="44.6" lengthAdjust="spacingAndGlyphs">170.00</text>
<text x="959.5" y="604" text-anchor="end" fill="#1f497d" textLength="46.2" lengthAdjust="spacingAndGlyphs">(55.00)</text>
<text x="1104.7" y="604" text-anchor="end" textLength="27.7" lengthAdjust="spacingAndGlyphs">32%</text>
<text x="87.8" y="625" text-anchor="end" textLength="16.2" lengthAdjust="spacingAndGlyphs">13</text>
<text x="93.5" y="625" fill="#1f497d" textLength="102.8" lengthAdjust="spacingAndGlyphs">Outpatient care</text>
<text x="368.5" y="625" fill="#1f497d" textLength="90.9" lengthAdjust="spacingAndGlyphs">Endocrinology</text>
<text x="670.3" y="625" text-anchor="end" fill="#1f497d" textLength="31.7" lengthAdjust="spacingAndGlyphs">5.0%</text>
<text x="814.8" y="625" text-anchor="end" fill="#1f497d" textLength="44.6" lengthAdjust="spacingAndGlyphs">140.00</text>
<text x="959.5" y="625" text-anchor="end" fill="#1f497d" textLength="46.2" lengthAdjust="spacingAndGlyphs">(25.00)</text>
<text x="1104.7" y="625" text-anchor="end" textLength="27.7" lengthAdjust="spacingAndGlyphs">18%</text>
<text x="87.8" y="646" text-anchor="end" textLength="16.2" lengthAdjust="spacingAndGlyphs">14</text>
<text x="93.5" y="646" fill="#1f497d" textLength="102.8" lengthAdjust="spacingAndGlyphs">Outpatient care</text>
<text x="368.5" y="646" fill="#1f497d" textLength="73.8" lengthAdjust="spacingAndGlyphs">Nephrology</text>
<text x="670.3" y="646" text-anchor="end" fill="#1f497d" textLength="31.7" lengthAdjust="spacingAndGlyphs">5.0%</text>
<text x="814.8" y="646" text-anchor="end" fill="#1f497d" textLength="44.6" lengthAdjust="spacingAndGlyphs">150.00</text>
<text x="959.5" y="646" text-anchor="end" fill="#1f497d" textLength="46.2" lengthAdjust="spacingAndGlyphs">(45.00)</text>
<text x="1104.7" y="646" text-anchor="end" textLength="27.7" lengthAdjust="spacingAndGlyphs">30%</text>
<text x="87.8" y="667" text-anchor="end" textLength="16.2" lengthAdjust="spacingAndGlyphs">15</text>
<text x="93.5" y="667" fill="#1f497d" textLength="102.8" lengthAdjust="spacingAndGlyphs">Outpatient care</text>
<text x="368.5" y="667" fill="#1f497d" textLength="78.3" lengthAdjust="spacingAndGlyphs">Orthopedics</text>
<text x="670.3" y="667" text-anchor="end" fill="#1f497d" textLength="31.7" lengthAdjust="spacingAndGlyphs">5.0%</text>
<text x="814.8" y="667" text-anchor="end" fill="#1f497d" textLength="44.6" lengthAdjust="spacingAndGlyphs">180.00</text>
<text x="959.5" y="667" text-anchor="end" fill="#1f497d" textLength="46.2" lengthAdjust="spacingAndGlyphs">(45.00)</text>
<text x="1104.7" y="667" text-anchor="end" textLength="27.7" lengthAdjust="spacingAndGlyphs">25%</text>
<text x="87.8" y="688" text-anchor="end" textLength="16.2" lengthAdjust="spacingAndGlyphs">16</text>
<text x="93.5" y="688" fill="#1f497d" textLength="102.8" lengthAdjust="spacingAndGlyphs">Outpatient care</text>
<text x="368.5" y="688" fill="#1f497d" textLength="65.9" lengthAdjust="spacingAndGlyphs">Psychiatry</text>
<text x="670.3" y="688" text-anchor="end" fill="#1f497d" textLength="31.7" lengthAdjust="spacingAndGlyphs">2.0%</text>
<text x="814.8" y="688" text-anchor="end" fill="#1f497d" textLength="44.6" lengthAdjust="spacingAndGlyphs">180.00</text>
<text x="959.5" y="688" text-anchor="end" fill="#1f497d" textLength="46.2" lengthAdjust="spacingAndGlyphs">(45.00)</text>
<text x="1104.7" y="688" text-anchor="end" textLength="27.7" lengthAdjust="spacingAndGlyphs">25%</text>
<text x="87.8" y="709" text-anchor="end" textLength="16.2" lengthAdjust="spacingAndGlyphs">17</text>
<text x="93.5" y="709" fill="#1f497d" textLength="102.8" lengthAdjust="spacingAndGlyphs">Outpatient care</text>
<text x="368.5" y="709" fill="#1f497d" textLength="111.7" lengthAdjust="spacingAndGlyphs">Gastroenterology</text>
<text x="670.3" y="709" text-anchor="end" fill="#1f497d" textLength="31.7" lengthAdjust="spacingAndGlyphs">7.0%</text>
<text x="814.8" y="709" text-anchor="end" fill="#1f497d" textLength="44.6" lengthAdjust="spacingAndGlyphs">130.00</text>
<text x="959.5" y="709" text-anchor="end" fill="#1f497d" textLength="46.2" lengthAdjust="spacingAndGlyphs">(25.00)</text>
<text x="1104.7" y="709" text-anchor="end" textLength="27.7" lengthAdjust="spacingAndGlyphs">19%</text>
<text x="87.8" y="730" text-anchor="end" textLength="16.2" lengthAdjust="spacingAndGlyphs">18</text>
<text x="93.5" y="730" fill="#1f497d" textLength="102.8" lengthAdjust="spacingAndGlyphs">Outpatient care</text>
<text x="368.5" y="730" fill="#1f497d" textLength="83.0" lengthAdjust="spacingAndGlyphs">Dermatology</text>
<text x="670.3" y="730" text-anchor="end" fill="#1f497d" textLength="31.7" lengthAdjust="spacingAndGlyphs">5.0%</text>
<text x="814.8" y="730" text-anchor="end" fill="#1f497d" textLength="44.6" lengthAdjust="spacingAndGlyphs">100.00</text>
<text x="959.5" y="730" text-anchor="end" fill="#1f497d" textLength="46.2" lengthAdjust="spacingAndGlyphs">(25.00)</text>
<text x="1104.7" y="730" text-anchor="end" textLength="27.7" lengthAdjust="spacingAndGlyphs">25%</text>
<text x="87.8" y="751" text-anchor="end" textLength="16.2" lengthAdjust="spacingAndGlyphs">19</text>
<text x="93.5" y="751" fill="#1f497d" textLength="102.8" lengthAdjust="spacingAndGlyphs">Outpatient care</text>
<text x="368.5" y="751" fill="#1f497d" textLength="50.0" lengthAdjust="spacingAndGlyphs">Urology</text>
<text x="670.3" y="751" text-anchor="end" fill="#1f497d" textLength="31.7" lengthAdjust="spacingAndGlyphs">3.0%</text>
<text x="814.8" y="751" text-anchor="end" fill="#1f497d" textLength="44.6" lengthAdjust="spacingAndGlyphs">125.00</text>
<text x="959.5" y="751" text-anchor="end" fill="#1f497d" textLength="46.2" lengthAdjust="spacingAndGlyphs">(25.00)</text>
<text x="1104.7" y="751" text-anchor="end" textLength="27.7" lengthAdjust="spacingAndGlyphs">20%</text>
<text x="87.8" y="772" text-anchor="end" textLength="16.2" lengthAdjust="spacingAndGlyphs">20</text>
<text x="93.5" y="772" fill="#1f497d" textLength="102.8" lengthAdjust="spacingAndGlyphs">Outpatient care</text>
<text x="368.5" y="772" fill="#1f497d" textLength="171.4" lengthAdjust="spacingAndGlyphs">Otorhinolaryngology (ENT)</text>
<text x="670.3" y="772" text-anchor="end" fill="#1f497d" textLength="31.7" lengthAdjust="spacingAndGlyphs">5.0%</text>
<text x="814.8" y="772" text-anchor="end" fill="#1f497d" textLength="44.6" lengthAdjust="spacingAndGlyphs">110.00</text>
<text x="959.5" y="772" text-anchor="end" fill="#1f497d" textLength="46.2" lengthAdjust="spacingAndGlyphs">(25.00)</text>
<text x="1104.7" y="772" text-anchor="end" textLength="27.7" lengthAdjust="spacingAndGlyphs">23%</text>
<text x="87.8" y="793" text-anchor="end" textLength="16.2" lengthAdjust="spacingAndGlyphs">21</text>
<text x="93.5" y="793" fill="#1f497d" textLength="102.8" lengthAdjust="spacingAndGlyphs">Outpatient care</text>
<text x="368.5" y="793" fill="#1f497d" textLength="75.3" lengthAdjust="spacingAndGlyphs">Gynecology</text>
<text x="670.3" y="793" text-anchor="end" fill="#1f497d" textLength="31.7" lengthAdjust="spacingAndGlyphs">5.0%</text>
<text x="814.8" y="793" text-anchor="end" fill="#1f497d" textLength="44.6" lengthAdjust="spacingAndGlyphs">130.00</text>
<text x="959.5" y="793" text-anchor="end" fill="#1f497d" textLength="46.2" lengthAdjust="spacingAndGlyphs">(25.00)</text>
<text x="1104.7" y="793" text-anchor="end" textLength="27.7" lengthAdjust="spacingAndGlyphs">19%</text>
<text x="87.8" y="814" text-anchor="end" textLength="16.2" lengthAdjust="spacingAndGlyphs">22</text>
<text x="93.5" y="814" fill="#1f497d" textLength="102.8" lengthAdjust="spacingAndGlyphs">Outpatient care</text>
<text x="368.5" y="814" fill="#1f497d" textLength="84.2" lengthAdjust="spacingAndGlyphs">Cosmetology</text>
<text x="670.3" y="814" text-anchor="end" fill="#1f497d" textLength="31.7" lengthAdjust="spacingAndGlyphs">2.0%</text>
<text x="814.8" y="814" text-anchor="end" fill="#1f497d" textLength="44.6" lengthAdjust="spacingAndGlyphs">100.00</text>
<text x="959.5" y="814" text-anchor="end" fill="#1f497d" textLength="46.2" lengthAdjust="spacingAndGlyphs">(35.00)</text>
<text x="1104.7" y="814" text-anchor="end" textLength="27.7" lengthAdjust="spacingAndGlyphs">35%</text>
<text x="87.8" y="835" text-anchor="end" textLength="16.2" lengthAdjust="spacingAndGlyphs">23</text>
<text x="93.5" y="835" fill="#1f497d" textLength="102.8" lengthAdjust="spacingAndGlyphs">Outpatient care</text>
<text x="368.5" y="835" fill="#1f497d" textLength="77.0" lengthAdjust="spacingAndGlyphs">Day surgery</text>
<text x="670.3" y="835" text-anchor="end" fill="#1f497d" textLength="31.7" lengthAdjust="spacingAndGlyphs">2.0%</text>
<text x="814.8" y="835" text-anchor="end" fill="#1f497d" textLength="44.6" lengthAdjust="spacingAndGlyphs">280.00</text>
<text x="959.5" y="835" text-anchor="end" fill="#1f497d" textLength="46.2" lengthAdjust="spacingAndGlyphs">(65.00)</text>
<text x="1104.7" y="835" text-anchor="end" textLength="27.7" lengthAdjust="spacingAndGlyphs">23%</text>
<text x="87.8" y="856" text-anchor="end" textLength="16.2" lengthAdjust="spacingAndGlyphs">24</text>
<text x="93.5" y="856" fill="#1f497d" textLength="89.8" lengthAdjust="spacingAndGlyphs">Inpatient care</text>
<text x="368.5" y="856" fill="#1f497d" textLength="116.2" lengthAdjust="spacingAndGlyphs">Overnight surgery</text>
<text x="670.3" y="856" text-anchor="end" fill="#1f497d" textLength="39.8" lengthAdjust="spacingAndGlyphs">40.0%</text>
<text x="814.8" y="856" text-anchor="end" fill="#1f497d" textLength="56.7" lengthAdjust="spacingAndGlyphs">1,000.00</text>
<text x="959.5" y="856" text-anchor="end" fill="#1f497d" textLength="54.3" lengthAdjust="spacingAndGlyphs">(400.00)</text>
<text x="1104.7" y="856" text-anchor="end" textLength="27.7" lengthAdjust="spacingAndGlyphs">40%</text>
<text x="87.8" y="877" text-anchor="end" textLength="16.2" lengthAdjust="spacingAndGlyphs">25</text>
<text x="93.5" y="877" fill="#1f497d" textLength="162.0" lengthAdjust="spacingAndGlyphs">Rehabilitation &amp; Therapy</text>
<text x="368.5" y="877" fill="#1f497d" textLength="106.1" lengthAdjust="spacingAndGlyphs">Physical therapy</text>
<text x="670.3" y="877" text-anchor="end" fill="#1f497d" textLength="31.7" lengthAdjust="spacingAndGlyphs">5.0%</text>
<text x="814.8" y="877" text-anchor="end" fill="#1f497d" textLength="36.5" lengthAdjust="spacingAndGlyphs">80.00</text>
<text x="959.5" y="877" text-anchor="end" fill="#1f497d" textLength="46.2" lengthAdjust="spacingAndGlyphs">(25.00)</text>
<text x="1104.7" y="877" text-anchor="end" textLength="27.7" lengthAdjust="spacingAndGlyphs">31%</text>
<text x="87.8" y="898" text-anchor="end" textLength="16.2" lengthAdjust="spacingAndGlyphs">26</text>
<text x="93.5" y="898" fill="#1f497d" textLength="162.0" lengthAdjust="spacingAndGlyphs">Rehabilitation &amp; Therapy</text>
<text x="368.5" y="898" fill="#1f497d" textLength="117.1" lengthAdjust="spacingAndGlyphs">Pain management</text>
<text x="670.3" y="898" text-anchor="end" fill="#1f497d" textLength="31.7" lengthAdjust="spacingAndGlyphs">5.0%</text>
<text x="814.8" y="898" text-anchor="end" fill="#1f497d" textLength="44.6" lengthAdjust="spacingAndGlyphs">100.00</text>
<text x="959.5" y="898" text-anchor="end" fill="#1f497d" textLength="46.2" lengthAdjust="spacingAndGlyphs">(25.00)</text>
<text x="1104.7" y="898" text-anchor="end" textLength="27.7" lengthAdjust="spacingAndGlyphs">25%</text>
</svg>
</body></html>
